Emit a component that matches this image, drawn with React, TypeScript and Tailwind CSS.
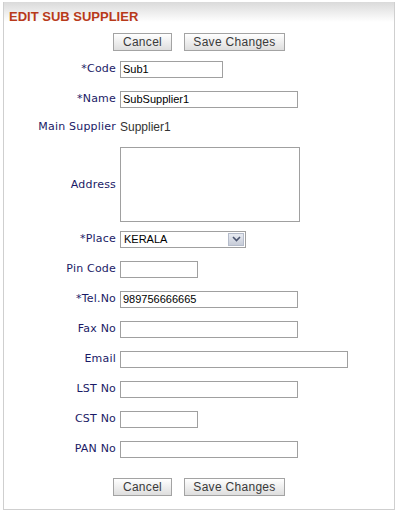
import React from 'react'

const label = "text-right text-[11px] tracking-[0.2px] text-[#1a1a66] whitespace-nowrap"
const field = "h-[17px] border border-[#a0a0a0] bg-white px-[2px] text-[11px] text-black outline-none"

const Btn = ({ children, w }: { children: React.ReactNode; w: string }) => (
  <button
    className={`${w} h-[18px] border border-[#a3a3a3] bg-gradient-to-b from-white to-[#dedede] text-[12px] leading-none tracking-[0.3px] text-[#3a3a3a]`}
    style={{ fontFamily: '"Liberation Sans", Arial, sans-serif' }}
  >
    {children}
  </button>
)

const Row = ({ name, children }: { name: string; children: React.ReactNode }) => (
  <div className="flex h-[30px] items-center">
    <div className={`w-[112px] ${label}`}>{name}</div>
    <div className="ml-[4px] flex items-center">{children}</div>
  </div>
)

const Buttons = () => (
  <div className="flex justify-center gap-[12px]">
    <Btn w="w-[59px]">Cancel</Btn>
    <Btn w="w-[101px]">Save Changes</Btn>
  </div>
)

export default function App() {
  const inFont = { fontFamily: '"Liberation Sans", Arial, sans-serif' }
  return (
    <div className="h-[517px] w-[401px] bg-white pt-[2px] pl-[3px]" style={{ fontFamily: '"DejaVu Sans", Verdana, sans-serif' }}>
      <div className="w-[392px] border-x border-b border-[#cfcfcf]">
        <div className="h-[20px] bg-gradient-to-b from-[#dadada] to-white pl-[5px] pt-[2px]">
          <span className="text-[13px] font-bold leading-[15px] text-[#b83a1a]" style={inFont}>
            EDIT SUB SUPPLIER
          </span>
        </div>

        <div className="pt-[11px]">
          <Buttons />
        </div>

        <div className="mt-[3px]">
          <Row name="*Code">
            <input className={`${field} w-[103px]`} style={inFont} defaultValue="Sub1" />
          </Row>
          <Row name="*Name">
            <input className={`${field} w-[178px]`} style={inFont} defaultValue="SubSupplier1" />
          </Row>
          <div className="flex h-[26px] items-center">
            <div className={`w-[112px] ${label}`}>Main Supplier</div>
            <div className="ml-[4px] text-[12px] text-[#333]" style={inFont}>Supplier1</div>
          </div>
          <div className="flex h-[84px] items-start pt-[7px]">
            <div className={`w-[112px] ${label} mt-[30px]`}>Address</div>
            <textarea className="ml-[4px] h-[75px] w-[180px] resize-none border border-[#a0a0a0] outline-none" />
          </div>
          <Row name="*Place">
            <div className="flex h-[17px] w-[126px] items-center border border-[#a0a0a0] bg-white" style={inFont}>
              <span className="flex-1 pl-[3px] text-[11px] text-black">KERALA</span>
              <span className="mr-[1px] flex h-[13px] w-[16px] items-center justify-center border border-[#b5bccb] bg-gradient-to-b from-[#e8ebf2] to-[#c7ccd8]">
                <svg width="9" height="6" viewBox="0 0 9 6">
                  <path d="M1 1 L4.5 4.5 L8 1" fill="none" stroke="#4b5570" strokeWidth="1.6" />
                </svg>
              </span>
            </div>
          </Row>
          <Row name="Pin Code">
            <input className={`${field} w-[78px]`} style={inFont} />
          </Row>
          <Row name="*Tel.No">
            <input className={`${field} w-[178px]`} style={inFont} defaultValue="989756666665" />
          </Row>
          <Row name="Fax No">
            <input className={`${field} w-[178px]`} style={inFont} />
          </Row>
          <Row name="Email">
            <input className={`${field} w-[228px]`} style={inFont} />
          </Row>
          <Row name="LST No">
            <input className={`${field} w-[178px]`} style={inFont} />
          </Row>
          <Row name="CST No">
            <input className={`${field} w-[78px]`} style={inFont} />
          </Row>
          <Row name="PAN No">
            <input className={`${field} w-[178px]`} style={inFont} />
          </Row>
        </div>

        <div className="pt-[14px] pb-[13px]">
          <Buttons />
        </div>
      </div>
    </div>
  )
}
